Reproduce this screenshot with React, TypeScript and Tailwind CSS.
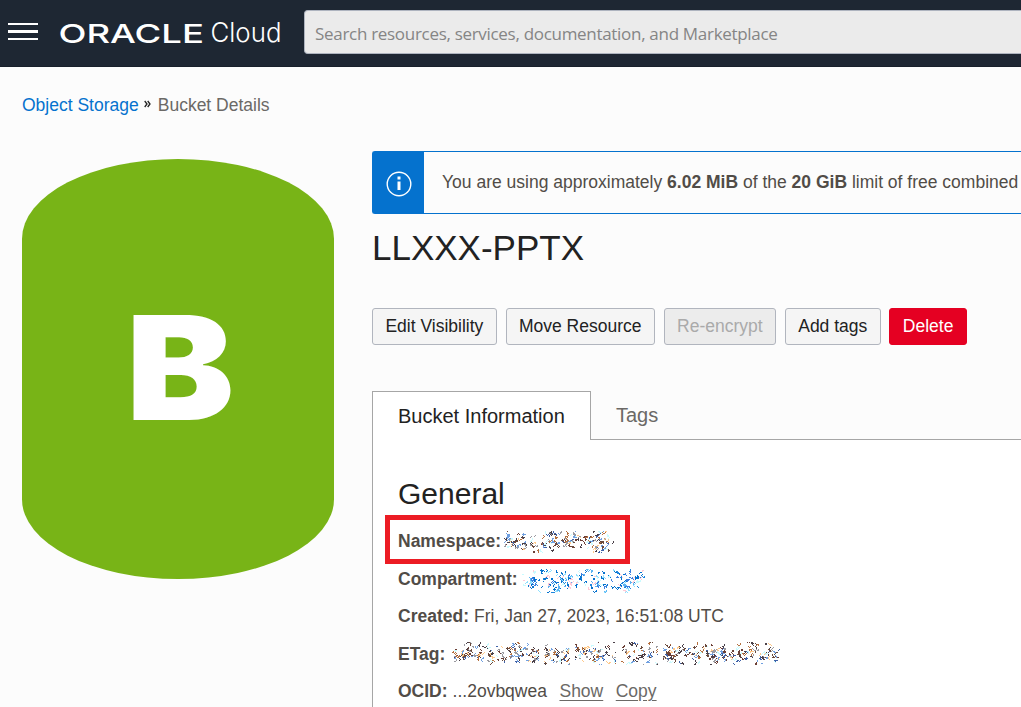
import type { ReactNode } from "react";

const INK = ["#4a4048", "#6b3f36", "#3f62a8", "#b5703f", "#ffc98a", "#c9fbff", "#6f9fe0", "#9a9aa0", "#4a4048", "#6a4a3c"];
const BLUE = ["#0572ce", "#0572ce", "#1f86dd", "#5db4f2", "#8fe0ff", "#ffc9d6", "#c9fbff", "#3d7fe0", "#0572ce"];

function Redacted({ width, height, colors, seed, gaps = [], className = "" }: {
  width: number; height: number; colors: string[]; seed: number; gaps?: number[]; className?: string;
}) {
  let s = seed;
  const rnd = () => {
    s = (s + 0x6d2b79f5) | 0;
    let t = Math.imul(s ^ (s >>> 15), 1 | s);
    t = (t + Math.imul(t ^ (t >>> 7), 61 | t)) ^ t;
    return ((t ^ (t >>> 14)) >>> 0) / 4294967296;
  };
  const layers: string[] = colors.map(() => "");
  const clusters = Math.round(width * 1.6);
  for (let i = 0; i < clusters; i++) {
    const c = Math.floor(rnd() * colors.length);
    let x = Math.floor(rnd() * (width - 2)) + 1;
    const wave = Math.sin(x / 9 + seed) * 1.5;
    let y = Math.floor(height / 2 + wave + (rnd() + rnd() + rnd() - 1.5) * height * 0.5);
    const n = 2 + Math.floor(rnd() * 7);
    for (let k = 0; k < n; k++) {
      const inGap = gaps.some((g) => Math.abs(x - g) < 3);
      if (!inGap && x >= 0 && x < width && y >= 0 && y < height) layers[c] += `M${x} ${y}h1v1h-1z`;
      x += Math.floor(rnd() * 3) - 1;
      y += Math.floor(rnd() * 3) - 1;
    }
  }
  return (
    <svg width={width} height={height} shapeRendering="crispEdges" className={`shrink-0 ${className}`} aria-hidden="true">
      {layers.map((d, i) => <path key={i} d={d} fill={colors[i]} />)}
    </svg>
  );
}

function Row({ label, children }: { label: string; children: ReactNode }) {
  return (
    <div className="flex h-[37.5px] items-center whitespace-nowrap">
      <span className="mr-[5px] font-bold">{label}</span>
      {children}
    </div>
  );
}

function Header() {
  return (
    <header className="flex h-[67px] items-start border-b border-[#18202b] bg-[#1e2733]">
      <button aria-label="Menu" className="ml-2 mt-[23px] flex w-[30px] flex-col gap-[5px]">
        <span className="h-[2px] w-full bg-white" />
        <span className="h-[3px] w-full bg-white" />
        <span className="h-[2px] w-full bg-white" />
      </button>
      <svg width="224" height="40" className="ml-[21px] mt-[13px] shrink-0" fill="#fff" role="img" aria-label="Oracle Cloud">
        <text x="-0.5" y="29.6" textLength="145.5" lengthAdjust="spacingAndGlyphs" className="font-['Inter',sans-serif] text-[26px] font-medium">ORACLE</text>
        <text x="151.5" y="29.4" textLength="71" lengthAdjust="spacingAndGlyphs" className="font-['Inter',sans-serif] text-[26.5px] font-light">Cloud</text>
      </svg>
      <div className="ml-[21px] mt-[10px] flex h-11 flex-1 items-center overflow-hidden rounded-l border border-r-0 border-[#aeb4bf] bg-[#ebebeb] pl-[10px] pt-[3px]">
        <span className="whitespace-nowrap font-['Open_Sans',sans-serif] text-[17px] tracking-[-0.3px] text-[#858585]">Search resources, services, documentation, and Marketplace</span>
      </div>
    </header>
  );
}

export default function App() {
  const btn = "h-[37px] rounded-[3px] border px-[12.4px] whitespace-nowrap";
  return (
    <div className="flex h-[707px] w-[1021px] flex-col overflow-hidden bg-[#fcfcfc] font-['Liberation_Sans',Arial,sans-serif] text-[17.5px] text-[#514c47]">
      <Header />
      <nav className="flex h-[84px] shrink-0 items-start pl-[22px] pt-[25px] leading-[26px]">
        <a className="text-[#0572ce]">Object Storage</a>
        <svg width="7" height="8" viewBox="0 0 7 8" className="ml-[5px] mr-[7px] mt-[8px]" fill="none" stroke="#222" strokeWidth="1.3">
          <path d="M.7 1 3 4 .7 7M3.7 1 6 4 3.7 7" />
        </svg>
        <span className="text-[#6b6966]">Bucket Details</span>
      </nav>
      <div className="flex min-h-0 flex-1">
        <aside className="w-[372px] shrink-0 pl-[22px] pt-2">
          <div className="flex h-[420px] w-[312.4px] items-center justify-center rounded-[50%/19%] bg-[#78b417]">
            <span className="translate-x-[2px] -translate-y-px scale-x-[1.125] font-['Inter',sans-serif] text-[144px] font-black leading-none text-white">B</span>
          </div>
        </aside>
        <main className="flex w-[649px] shrink-0 flex-col overflow-hidden">
          <div className="flex h-[63px] shrink-0 rounded-l-[3px] border border-r-0 border-[#0572ce]">
            <div className="flex w-[51px] shrink-0 items-center justify-center bg-[#0572ce]">
              <svg width="26" height="26" viewBox="0 0 26 26" className="mt-[2px]" fill="none" stroke="#fff">
                <circle cx="13" cy="13" r="11.8" strokeWidth="1.4" />
                <path d="M13 10.5V19M13 5.5v3" strokeWidth="3" />
              </svg>
            </div>
            <p className="whitespace-nowrap pl-[18px] pt-[17px] leading-[26px]">
              You are using approximately <b>6.02 MiB</b> of the <b>20 GiB</b> limit of free combined
            </p>
          </div>
          <h1 className="mt-[12px] text-[35px] leading-[44px] text-[#222]">LLXXX-PPTX</h1>
          <div className="mt-[38px] flex shrink-0 gap-[8.8px] text-[#222]">
            <button className={`${btn} border-[#b1b5be] bg-[#f5f5f5]`}>Edit Visibility</button>
            <button className={`${btn} border-[#b1b5be] bg-[#f5f5f5]`}>Move Resource</button>
            <button className={`${btn} border-[#b1b5be] bg-[#ececec] text-[#aaa]`}>Re-encrypt</button>
            <button className={`${btn} border-[#b1b5be] bg-[#f5f5f5]`}>Add tags</button>
            <button className={`${btn} border-[#e50022] bg-[#e50022] text-white`}>Delete</button>
          </div>
          <div className="mt-[46px] flex h-[49px] shrink-0 text-[20px]">
            <div className="flex w-[219px] items-center border border-b-0 border-[#a6a6a6] bg-white pb-px pl-[25px] text-[#222]">Bucket Information</div>
            <div className="flex flex-1 items-center border-b border-[#a6a6a6] pl-[25px] text-[#6b6966]">Tags</div>
          </div>
          <section className="min-h-0 flex-1 border-l border-[#a6a6a6] bg-white pl-[25px] pt-[34px]">
            <h2 className="text-[30px] leading-[40px] text-[#222]">General</h2>
            <div className="ml-[-13px] mt-px flex h-[49px] w-[245px] items-center border-[5px] border-[#ec1c24] pl-[8px] pt-[3px]">
              <Row label="Namespace:"><Redacted width={110} height={22} colors={INK} seed={17} className="ml-[-2px] mt-px" /></Row>
            </div>
            <div className="mt-[-4px]">
              <Row label="Compartment:"><Redacted width={124} height={24} colors={BLUE} seed={42} className="ml-[-1px] mt-[4px]" /></Row>
              <Row label="Created:">Fri, Jan 27, 2023, 16:51:08 UTC</Row>
              <Row label="ETag:"><Redacted width={328} height={23} colors={INK} seed={91} gaps={[89, 120, 166, 208]} className="ml-[2px]" /></Row>
              <Row label="OCID:">
                <span>...2ovbqwea</span>
                <a className="ml-[12.5px] underline underline-offset-[3px] text-[#6b6966]">Show</a>
                <a className="ml-[12.5px] underline underline-offset-[3px] text-[#6b6966]">Copy</a>
              </Row>
            </div>
          </section>
        </main>
      </div>
    </div>
  );
}
